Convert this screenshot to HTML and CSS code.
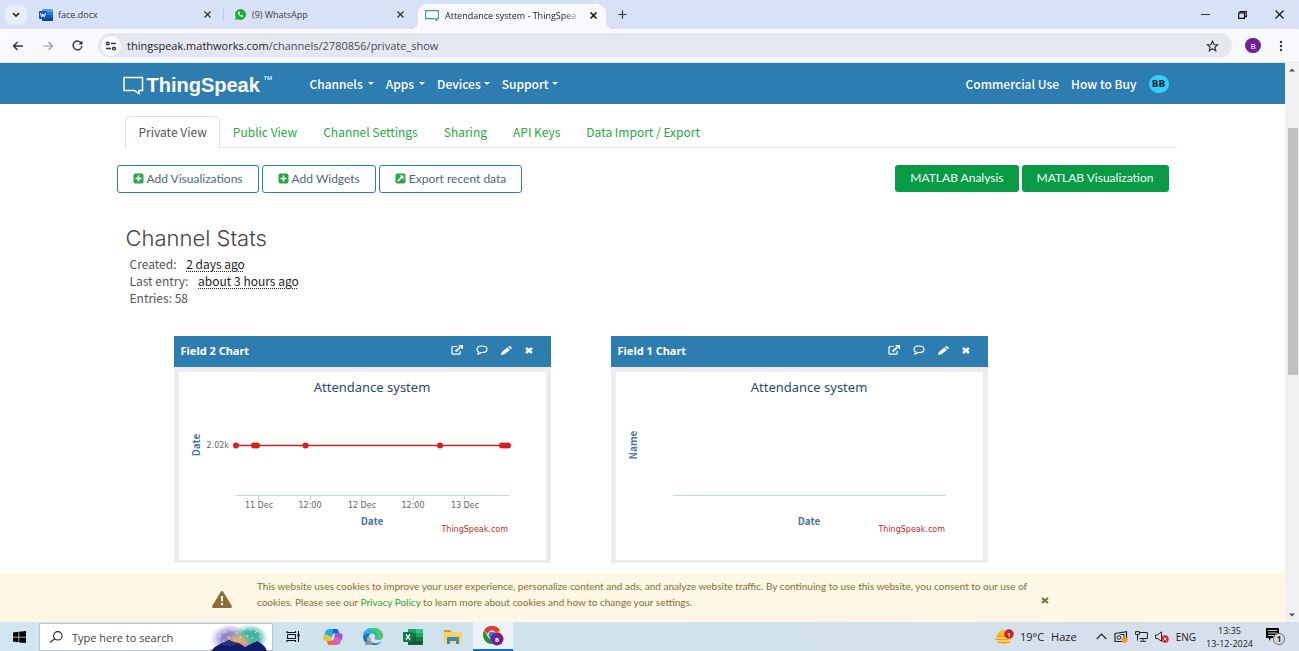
FILE: index.html
```
<!DOCTYPE html>
<html lang="en">
<head>
<meta charset="utf-8">
<title>Attendance system - ThingSpeak</title>
<link rel="stylesheet" href="styles.css">
</head>
<body>
<header class="tabstrip">
  <button class="tab-search" aria-label="Search tabs"><svg width="8" height="6" viewBox="0 0 8 6"><path d="M1 1l3 3 3-3" fill="none" stroke="#222" stroke-width="1.6"/></svg></button>
  <div class="tab tab-first">
    <svg width="14" height="12" viewBox="0 0 14 12"><rect x="3" width="11" height="12" rx="1" fill="#41a5ee"/><path d="M3 3h11v3H3z" fill="#2b7cd3"/><path d="M3 6h11v3H3z" fill="#185abd"/><path d="M3 9h11v2q0 1-1 1H4q-1 0-1-1z" fill="#103f91"/><rect y="2" width="8" height="8" rx="1" fill="#185abd"/><path d="M1.500 4l1.200 4L4 5l1.300 3 1.200-4" fill="none" stroke="#fff"/></svg>
    <span class="tab-title">face.docx</span>
    <button class="close" aria-label="Close tab"><svg width="7" height="7" viewBox="0 0 7 7"><path d="M.5.5l6 6M6.500.5l-6 6" stroke="#333" stroke-width="1.300"/></svg></button>
  </div>
  <div class="tab tab-second">
    <svg width="11" height="11" viewBox="0 0 12 12"><path d="M6 0a6 6 0 1 1-3 11.200L0 12l.8-3A6 6 0 0 1 6 0z" fill="#1faf38"/><path d="M4 3c-1 .6-1 2 .4 3.600S7.600 9 8.700 8.200c.5-.4.4-1-.1-1.200l-1-.5-.7.7C6 6.800 5.200 6 4.900 5.200l.6-.7-.5-1.200C4.800 2.900 4.400 2.800 4 3z" fill="#fff"/></svg>
    <span class="tab-title">(9) WhatsApp</span>
    <button class="close" aria-label="Close tab"><svg width="7" height="7" viewBox="0 0 7 7"><path d="M.5.5l6 6M6.500.5l-6 6" stroke="#333" stroke-width="1.300"/></svg></button>
  </div>
  <div class="tab tab-active">
    <svg width="14" height="11" viewBox="0 0 14 11"><path d="M.6.6h12.800v8h-1.500v2L9 8.600H.6z" fill="#fff" stroke="#3d93bd" stroke-width="1.100"/></svg>
    <span class="tab-title fade">Attendance system - ThingSpea</span>
    <button class="close" aria-label="Close tab"><svg width="7" height="7" viewBox="0 0 7 7"><path d="M.5.5l6 6M6.500.5l-6 6" stroke="#111" stroke-width="1.500"/></svg></button>
  </div>
  <button class="new-tab" aria-label="New tab"><svg width="9" height="9" viewBox="0 0 9 9"><path d="M4.500.5v8M.5 4.500h8" stroke="#333" stroke-width="1.200"/></svg></button>
  <div class="window-controls">
    <button aria-label="Minimize"><svg width="9" height="9" viewBox="0 0 9 9"><path d="M0 4.500h9" stroke="#333"/></svg></button>
    <button aria-label="Restore"><svg width="9" height="8" viewBox="0 0 9 8"><path d="M.7 2h5.800v5.300H.7zM2 2V.7h6.300v5H6.500" fill="none" stroke="#111" stroke-width="1.200"/></svg></button>
    <button aria-label="Close"><svg width="9" height="9" viewBox="0 0 9 9"><path d="M.5.5l8 8M8.500.5l-8 8" stroke="#111" stroke-width="1.100"/></svg></button>
  </div>
</header>

<div class="toolbar">
  <button aria-label="Back"><svg width="12" height="10" viewBox="0 0 12 10"><path d="M11 5H1.500M5.500 1l-4 4 4 4" fill="none" stroke="#333" stroke-width="1.400"/></svg></button>
  <button aria-label="Forward"><svg width="12" height="10" viewBox="0 0 12 10"><path d="M1 5h9.500M6.500 1l4 4-4 4" fill="none" stroke="#999" stroke-width="1.200"/></svg></button>
  <button aria-label="Reload"><svg width="11" height="11" viewBox="0 0 11 11"><path d="M9.500 3.500A4.400 4.400 0 1 0 9.900 6" fill="none" stroke="#333" stroke-width="1.400"/><path d="M10.500.5v4h-4z" fill="#333"/></svg></button>
  <div class="omnibox">
    <button class="site-info" aria-label="Site information"><svg width="12" height="10" viewBox="0 0 12 10"><g fill="none" stroke="#333" stroke-width="1.400"><circle cx="2.800" cy="2.500" r="1.400"/><path d="M6 2.500h5M1 7.500h5"/><circle cx="9" cy="7.500" r="1.400"/></g></svg></button>
    <span class="url">thingspeak.mathworks.com<span class="path">/channels/2780856/private_show</span></span>
    <button class="star" aria-label="Bookmark"><svg width="13" height="12" viewBox="0 0 13 12"><path d="M6.500 1.200l1.500 3.300 3.600.3-2.700 2.400.8 3.500-3.200-1.900-3.200 1.900.8-3.500L1.400 4.800 5 4.500z" fill="none" stroke="#333" stroke-width="1.200"/></svg></button>
  </div>
  <button class="profile">B</button>
  <button class="menu" aria-label="Menu"><svg width="4" height="12" viewBox="0 0 4 12"><g fill="#333"><circle cx="2" cy="2" r="1.200"/><circle cx="2" cy="6" r="1.200"/><circle cx="2" cy="10" r="1.200"/></g></svg></button>
</div>

<div class="viewport">
  <div class="page">
    <nav class="navbar">
      <div class="container nav-inner">
        <a class="brand" href="#"><svg width="21" height="19" viewBox="0 0 21 19"><path d="M1 1.500h18.500v13H16v3l-4.500-3H1z" fill="none" stroke="#fff" stroke-width="1.500"/></svg><span>ThingSpeak</span><small>™</small></a>
        <div class="nav-links">
          <a class="drop" href="#">Channels</a><a class="drop" href="#">Apps</a><a class="drop tight" href="#">Devices</a><a class="drop tight" href="#">Support</a>
        </div>
        <div class="nav-right"><a href="#">Commercial Use</a><a href="#">How to Buy</a><a class="avatar" href="#">BB</a></div>
      </div>
    </nav>
    <main class="container content">
      <div class="tabs">
        <a class="active" href="#">Private View</a><a href="#">Public View</a><a href="#">Channel Settings</a><a href="#">Sharing</a><a href="#">API Keys</a><a href="#">Data Import / Export</a>
      </div>
      <div class="actions">
        <button class="outline"><svg width="11" height="11" viewBox="0 0 11 11"><rect x=".5" y=".5" width="10" height="10" rx="2" fill="#28a745"/><path d="M5.500 2.500v6M2.500 5.500h6" stroke="#fff" stroke-width="1.600"/></svg>Add Visualizations</button>
        <button class="outline"><svg width="11" height="11" viewBox="0 0 11 11"><rect x=".5" y=".5" width="10" height="10" rx="2" fill="#28a745"/><path d="M5.500 2.500v6M2.500 5.500h6" stroke="#fff" stroke-width="1.600"/></svg>Add Widgets</button>
        <button class="outline"><svg width="11" height="11" viewBox="0 0 11 11"><rect x=".5" y=".5" width="10" height="10" rx="2" fill="#28a745"/><path d="M2.800 8.200l4-4" stroke="#fff" stroke-width="1.700"/><path d="M4.500 2.500h4v4z" fill="#fff"/></svg>Export recent data</button>
        <span class="grow"></span>
        <button class="solid">MATLAB Analysis</button>
        <button class="solid">MATLAB Visualization</button>
      </div>
      <section class="stats">
        <h3>Channel Stats</h3>
        <p>Created: <span class="when">2 days ago</span></p>
        <p>Last entry: <span class="when">about 3 hours ago</span></p>
        <p>Entries: 58</p>
      </section>
      <div class="charts">
        <section class="card">
          <div class="card-head"><h4>Field 2 Chart</h4>
            <button aria-label="Open"><svg width="12" height="10" viewBox="0 0 12 10"><path d="M6 1.500H1.800Q1 1.500 1 2.300v6q0 .9.800.9h6.500q.9 0 .9-.9V6" fill="none" stroke="#fff" stroke-width="1.200"/><path d="M4.500 6.500L9 2.500" stroke="#fff" stroke-width="1.700"/><path d="M7 0h5v4.500z" fill="#fff"/></svg></button>
            <button aria-label="Comment"><svg width="12" height="10" viewBox="0 0 12 10"><path d="M6 1c3 0 5 1.300 5 3.200S9 7.500 6 7.500H5C4.200 8.400 3 9 1.800 9q.9-.9.900-2C1.500 6.300 1 5.300 1 4.200 1 2.300 3 1 6 1z" fill="none" stroke="#fff" stroke-width="1.200"/></svg></button>
            <button aria-label="Edit"><svg width="11" height="9" viewBox="0 0 11 9"><path d="M0 9l.8-3L6.300 1.600l2.600 2.300L3.400 8.300zM7 1l1-.8q.6-.4 1.200 0l1.400 1.300q.5.500 0 1l-1 .8z" fill="#fff"/></svg></button>
            <button aria-label="Remove"><svg width="8" height="7" viewBox="0 0 8 7"><path d="M1 1l6 5M7 1L1 6" stroke="#fff" stroke-width="2.400"/></svg></button>
          </div>
          <div class="card-body">
            <svg class="chart" viewBox="0 0 367 188">
              <text class="c-title" x="193" y="20">Attendance system</text>
              <text class="axis-title" transform="translate(21 73) rotate(-90)">Date</text>
              <text class="tick end" x="50" y="76">2.02k</text>
              <path class="axis" d="M57 123.500h273M79.500 123v5M131.500 123v5M182.500 123v5M234.500 123v5M285.500 123v5"/>
              <path class="series" d="M57 73.500h272"/>
              <g class="dots"><circle cx="57" cy="73.500" r="3"/><circle cx="75" cy="73.500" r="3"/><circle cx="78" cy="73.500" r="3"/><circle cx="126.500" cy="73.500" r="3"/><circle cx="261" cy="73.500" r="3"/><circle cx="323" cy="73.500" r="3"/><circle cx="326" cy="73.500" r="3"/><circle cx="329" cy="73.500" r="3"/></g>
              <g class="tick"><text x="80" y="136">11 Dec</text><text x="131" y="136">12:00</text><text x="183" y="136">12 Dec</text><text x="234" y="136">12:00</text><text x="286" y="136">13 Dec</text></g>
              <text class="axis-title" x="193" y="153">Date</text>
              <text class="credit" x="329" y="160">ThingSpeak.com</text>
            </svg>
          </div>
        </section>
        <section class="card">
          <div class="card-head"><h4>Field 1 Chart</h4>
            <button aria-label="Open"><svg width="12" height="10" viewBox="0 0 12 10"><path d="M6 1.500H1.800Q1 1.500 1 2.300v6q0 .9.800.9h6.500q.9 0 .9-.9V6" fill="none" stroke="#fff" stroke-width="1.200"/><path d="M4.500 6.500L9 2.500" stroke="#fff" stroke-width="1.700"/><path d="M7 0h5v4.500z" fill="#fff"/></svg></button>
            <button aria-label="Comment"><svg width="12" height="10" viewBox="0 0 12 10"><path d="M6 1c3 0 5 1.300 5 3.200S9 7.500 6 7.500H5C4.200 8.400 3 9 1.800 9q.9-.9.900-2C1.500 6.300 1 5.300 1 4.200 1 2.300 3 1 6 1z" fill="none" stroke="#fff" stroke-width="1.200"/></svg></button>
            <button aria-label="Edit"><svg width="11" height="9" viewBox="0 0 11 9"><path d="M0 9l.8-3L6.300 1.600l2.600 2.300L3.400 8.300zM7 1l1-.8q.6-.4 1.200 0l1.400 1.300q.5.500 0 1l-1 .8z" fill="#fff"/></svg></button>
            <button aria-label="Remove"><svg width="8" height="7" viewBox="0 0 8 7"><path d="M1 1l6 5M7 1L1 6" stroke="#fff" stroke-width="2.400"/></svg></button>
          </div>
          <div class="card-body">
            <svg class="chart" viewBox="0 0 367 188">
              <text class="c-title" x="193" y="20">Attendance system</text>
              <text class="axis-title" transform="translate(21 73) rotate(-90)">Name</text>
              <path class="axis" d="M57 123.500h273"/>
              <text class="axis-title" x="193" y="153">Date</text>
              <text class="credit" x="329" y="160">ThingSpeak.com</text>
            </svg>
          </div>
        </section>
      </div>
    </main>
    <aside class="cookies">
      <svg width="20" height="17" viewBox="0 0 20 17"><path d="M8.800.8q1.200-1.500 2.400 0l8.500 14q.8 1.900-1.200 2.200h-17q-2-.3-1.200-2.200z" fill="#8a6d3b"/><path d="M8.800 5h2.400l-.4 5.500H9.200zM8.900 12h2.200v2.200H8.900z" fill="#fcf8e3"/></svg>
      <p>This website uses cookies to improve your user experience, personalize content and ads, and analyze website traffic. By continuing to use this website, you consent to our use of cookies. Please see our <a href="#">Privacy Policy</a> to learn more about cookies and how to change your settings.</p>
      <button aria-label="Dismiss"><svg width="8" height="7" viewBox="0 0 8 7"><path d="M1 1l6 5M7 1L1 6" stroke="#8a6d3b" stroke-width="2.200"/></svg></button>
    </aside>
  </div>
  <div class="scrollbar">
    <svg width="6" height="4" viewBox="0 0 6 4"><path d="M0 3.500L3 .5l3 3z" fill="#505050"/></svg>
    <div class="track"><div class="thumb"></div></div>
    <svg width="6" height="4" viewBox="0 0 6 4"><path d="M0 .5l3 3 3-3z" fill="#505050"/></svg>
  </div>
</div>

<footer class="taskbar">
  <button class="start" aria-label="Start"><svg width="13" height="12" viewBox="0 0 13 12"><path d="M0 1.500l5.500-.7v4.900H0zM6.200.7L13 0v5.700H6.200zM0 6.400h5.500v4.900L0 10.600zM6.200 6.400H13V12l-6.800-.6z" fill="#000"/></svg></button>
  <label class="search">
    <svg width="14" height="12" viewBox="0 0 14 12"><g fill="none" stroke="#222" stroke-width="1.100"><circle cx="8.800" cy="4.800" r="4.200"/><path d="M5.700 7.800L1 11.500"/></g></svg>
    <input type="text" placeholder="Type here to search" aria-label="Search">
    <svg width="58" height="27" viewBox="0 0 58 27"><defs><radialGradient id="g1"><stop offset=".4" stop-color="#8e86d0"/><stop offset="1" stop-color="#b3a9e0" stop-opacity="0"/></radialGradient><radialGradient id="g2"><stop offset=".5" stop-color="#3fb7a2"/><stop offset="1" stop-color="#7ad0c5" stop-opacity="0"/></radialGradient><radialGradient id="g3"><stop offset=".2" stop-color="#e2b26c"/><stop offset="1" stop-color="#c9a983" stop-opacity="0"/></radialGradient></defs><ellipse cx="20" cy="15" rx="20" ry="15" fill="url(#g1)"/><ellipse cx="40" cy="14" rx="18" ry="14" fill="url(#g2)"/><ellipse cx="28" cy="17" rx="15" ry="10" fill="url(#g3)"/><path d="M29 17l4 6 5-5z" fill="#ee9678"/><g stroke="#fff" stroke-width=".7"><path d="M9 12l2 1M15 7l1 2M22 5v2M27 8l-1 2M33 4l1 2M40 5v2M47 7l-2 2M51 12l-2 1M31 12l-1 2M37 11l1 2M43 13l-2 2M18 13l2 1M13 17l2 1M47 17l-2 1"/></g><path d="M1 27q4-5 9-7l9-4q6 3 10 3l6 4 12-6q8 4 10 10z" fill="#101c68"/><path d="M10 20l9-4q6 3 10 3-5 3-10 3t-9-2z" fill="#243484"/></svg>
  </label>
  <div class="apps">
    <button aria-label="Task view"><svg width="14" height="13" viewBox="0 0 14 13"><path d="M1 1v1.500h8.500V1M1.500 4.500h8v4h-8zM1 12v-1.500h8.500V12M12.500 1v11" fill="none" stroke="#111" stroke-width="1.100"/><path d="M11.500 4h2v2.500h-2z" fill="#111"/></svg></button>
    <button aria-label="Copilot"><svg width="20" height="16" viewBox="0 0 20 16"><path d="M7 0h6q2 0 2.500 2l.7 2H12q-2 0-2.600 2L7.600 12H4Q0 12 .6 8L2.500 2.500Q3.500 0 7 0z" fill="#25a9e0"/><path d="M10 0h3q2 0 2.500 2l.7 2H12q-1.600 0-2.300 1.600z" fill="#1967c6"/><path d="M2 5L.6 8Q0 12 4 12h3.600l1.200-4z" fill="#e8c63d"/><path d="M13 16H7q-2 0-2.500-2l-.7-2H8q2 0 2.600-2l1.800-6H16q4 0 3.400 4l-1.900 5.500Q16.500 16 13 16z" fill="#d862b5"/><path d="M12.400 4H16q4 0 3.400 4l-1 3q-3-4-7.300-3z" fill="#a653db"/><path d="M10 16H7q-2 0-2.500-2l-.7-2H8q1.600 0 2.300-1.600z" fill="#f36a45"/></svg></button>
    <button aria-label="Edge"><svg width="20" height="17" viewBox="0 0 20 17"><path d="M0 8.500A10 8.500 0 0 1 20 7.500c0 3-2.200 4.500-5 4.500-3 0-4-1.200-3-2.500 1-1.800-.6-4-3.500-4C4 5.500 1 8 0 11z" fill="#24b5d6"/><path d="M5 1.200C11-1.500 20 1 20 7.500c0 3-2.200 4.500-5 4.500-2 0-3-.6-3.200-1.400 4 .4 4.600-6.600-2.800-8.100z" fill="#52c66a"/><path d="M0 9c1-3 4.500-4 8.500-3.500-3.500 1-4 6 0 8.500 3 1.800 7 1.500 10-.6C15.500 18 6 18.500 2 14Q0 12 0 9z" fill="#1277ca"/><circle cx="6" cy="11" r="2.200" fill="#c8a58b"/><path d="M2 17q0-4 4-4t4 4z" fill="#8b9398"/></svg></button>
    <button aria-label="Excel"><svg width="20" height="16" viewBox="0 0 20 16"><path d="M5 1q0-1 1-1h7v16H6q-1 0-1-1z" fill="#21a366"/><path d="M13 0h6q1 0 1 1v3h-7z" fill="#33c481"/><path d="M5 4h8v4H5z" fill="#107c41"/><path d="M13 4h7v4h-7z" fill="#21a366"/><path d="M5 8h15v7q0 1-1 1H6q-1 0-1-1z" fill="#185c37"/><path d="M13 8h7v4h-7z" fill="#107c41"/><rect y="3" width="10" height="10" rx="1" fill="#107c41"/><path d="M3 5.500l4 5M7 5.500l-4 5" stroke="#fff" stroke-width="1.300"/></svg></button>
    <button aria-label="File Explorer"><svg width="18" height="14" viewBox="0 0 18 14"><path d="M0 1q0-1 1-1h5l2 2H0z" fill="#d99a1f"/><path d="M0 2h17q1 0 1 1v10H0z" fill="#f8d167"/><path d="M3 8q0-1 1-1h10q1 0 1 1v6h-3v-3H6v3H3z" fill="#3b8cb8"/></svg></button>
    <button class="running" aria-label="Chrome"><svg width="22" height="20" viewBox="0 0 22 20"><circle cx="10" cy="9" r="9" fill="#fbc116"/><path d="M10 9L2.200 4.500A9 9 0 0 1 17.800 4.500z" fill="#e33b2e"/><path d="M10 0a9 9 0 0 1 7.800 4.500H10A4.500 4.500 0 0 0 5.800 7.500L2.200 4.500A9 9 0 0 1 10 0z" fill="#e33b2e"/><path d="M2.200 4.500L6.100 11.300Q8 14 11 13.300L10 18A9 9 0 0 1 2.200 4.500z" fill="#229342"/><circle cx="10" cy="9" r="4.400" fill="#fff"/><circle cx="10" cy="9" r="3.500" fill="#3a7de8"/><circle cx="15" cy="13" r="6.500" fill="#71218f"/><text class="mini" x="15" y="16">B</text></svg></button>
  </div>
  <span class="grow"></span>
  <button class="weather"><svg width="19" height="16" viewBox="0 0 19 16"><circle cx="9" cy="8" r="7" fill="#f9b62b"/><path d="M1 7.500h14M0 10.500h13M3 13.500h12" stroke="#f0982a" stroke-width="1.200"/><path d="M1 9h15M2 12h14" stroke="#ffd65c" stroke-width="1.400"/><circle cx="14" cy="5" r="4.700" fill="#cb2127"/><text class="mini" x="14" y="8">1</text></svg><span>19°C</span><span>Haze</span></button>
  <div class="tray">
    <button aria-label="Hidden icons"><svg width="11" height="7" viewBox="0 0 11 7"><path d="M.7 6l4.800-5 4.800 5" fill="none" stroke="#222" stroke-width="1.200"/></svg></button>
    <button aria-label="Meet now"><svg width="14" height="12" viewBox="0 0 14 12"><path d="M1 2.500L12.500.7v8L8 10.500H1z" fill="none" stroke="#222" stroke-width="1.200"/><circle cx="5" cy="6.500" r="1.800" fill="none" stroke="#222"/><path d="M6.500 3.500H10v3" fill="none" stroke="#222"/><circle cx="10.500" cy="9" r="3" fill="#f29a1f"/></svg></button>
    <button aria-label="Network"><svg width="13" height="11" viewBox="0 0 13 11"><path d="M4 1.500h8.400v6H4.500M8 7.500v2.800M5 10.300h6M.6.6h3.800v3H.6zM2.500 3.600v6" fill="none" stroke="#222"/></svg></button>
    <button aria-label="Volume muted"><svg width="14" height="12" viewBox="0 0 14 12"><path d="M.6 4h2L6.500.8v9.400L2.600 7.500h-2z" fill="none" stroke="#222"/><circle cx="10" cy="8" r="3.700" fill="#d9232e"/><path d="M8.500 6.500l3 3M11.500 6.500l-3 3" stroke="#fff"/></svg></button>
    <span class="lang">ENG</span>
  </div>
  <div class="clock"><span>13:35</span><span>13-12-2024</span></div>
  <button class="notify" aria-label="Notifications"><svg width="20" height="19" viewBox="0 0 20 19"><path d="M0 1h13v10H5l-2 3v-3H0z" fill="#000"/><path d="M2 3.500h9M2 6h9M2 8.500h6" stroke="#dfe5f0" stroke-width=".9"/><circle cx="13" cy="12" r="5.600" fill="#d2d6de" stroke="#777"/><text class="mini dark" x="13" y="15">1</text></svg></button>
</footer>
</body>
</html>
```
FILE: styles.css
```
* { box-sizing: border-box; }
body { margin: 0; height: 100vh; display: flex; flex-direction: column; overflow: hidden; background: #fff; color: #333; font-family: "Noto Sans CJK SC", "Noto Sans", sans-serif; font-size: 12px; }
button { margin: 0; padding: 0; border: 0; background: none; font: inherit; color: inherit; display: inline-flex; align-items: center; justify-content: center; }
a { text-decoration: none; color: #28a745; }
svg { display: block; flex: none; }
p, h3, h4 { margin: 0; font-weight: 400; }
.grow { flex: 1; }

/* browser frame */
.tabstrip { flex: none; height: 29px; display: flex; align-items: center; background: #d8e2f6; font: 9px "Open Sans", sans-serif; color: #3c3c46; }
.tab-search { width: 22px; height: 20px; margin-left: 5px; border-radius: 7px; background: #e9eefb; }
.tab { display: flex; align-items: center; height: 25px; }
.tab-title { flex: 1; margin-left: 6px; white-space: nowrap; }
.tab-first { width: 184px; margin-left: 12px; padding-right: 12px; }
.tab-first .tab-title { margin-left: 5px; }
.tab-second { width: 195px; padding: 0 14px 0 11px; border-left: 1px solid #b5cdf5; height: 13px; }
.tab-active { position: relative; align-self: flex-end; width: 188px; padding: 0 9px 3px 7px; border-radius: 9px 9px 0 0; background: #f9f9fe; color: #222; }
.tab-active::before, .tab-active::after { content: ""; position: absolute; bottom: 0; width: 8px; height: 8px; }
.tab-active::before { left: -8px; background: radial-gradient(circle at 0 0, transparent 8px, #f9f9fe 8px); }
.tab-active::after { right: -8px; background: radial-gradient(circle at 100% 0, transparent 8px, #f9f9fe 8px); }
.fade { mask-image: linear-gradient(to right, #000 85%, transparent 100%); margin-right: 6px; }
.new-tab { margin-left: 12px; }
.window-controls { margin-left: auto; display: flex; gap: 28px; padding-right: 15px; }
.toolbar { flex: none; height: 34px; display: flex; align-items: center; gap: 18px; padding: 0 16px 0 12px; background: #f9f9fe; border-radius: 8px 8px 0 0; border-bottom: 1px solid #e3e8f4; }
.omnibox { flex: 1; height: 25px; display: flex; align-items: center; padding: 0 13px 0 3px; border-radius: 13px; background: #e5e7f2; font: 11px "Open Sans", sans-serif; color: #1d1d22; margin-left: -3px; }
.site-info { width: 20px; height: 20px; border-radius: 10px; background: #fbfbff; }
.url { flex: 1; margin-left: 6px; }
.path { color: #4c4d58; }
.profile { width: 16px; height: 15px; margin-left: -5px; border-radius: 8px; background: #71218f; color: #fff; font: 8px "Open Sans", sans-serif; }

/* viewport */
.viewport { flex: 1; min-height: 0; display: flex; }
.page { flex: 1; min-width: 0; display: flex; flex-direction: column; }
.scrollbar { width: 14px; display: flex; flex-direction: column; align-items: center; padding: 5px 0; background: #f1f1f1; }
.track { flex: 1; width: 11px; padding: 56px 0 0 1px; }
.thumb { height: 51%; background: #c1c1c1; }
.container { width: 100%; max-width: 1052px; margin: 0 auto; }
.navbar { flex: none; height: 41px; background: #2e7db1; }
.nav-inner { height: 100%; display: flex; align-items: center; padding-left: 6px; font-weight: 500; }
.navbar a { color: #fff; }
.brand { display: flex; align-items: center; gap: 3px; width: 187px; margin-top: 4px; font: bold 20px "Liberation Sans", Arial, sans-serif; }
.brand small { align-self: flex-start; font-size: 10px; font-weight: 400; }
.nav-links { flex: 1; display: flex; gap: 12px; }
.drop { display: flex; align-items: center; gap: 5px; }
.drop.tight { gap: 3px; }
.drop::after { content: ""; border: 3px solid transparent; border-top-color: #fff; border-bottom: 0; }
.nav-right { display: flex; align-items: center; gap: 12px; }
.avatar { width: 20px; height: 18px; border-radius: 10px; background: #33cdf5; font: bold 9px/18px "DejaVu Sans", sans-serif; text-align: center; }
.navbar .avatar { color: #0b2742; }
.content { flex: 1; min-height: 0; padding-top: 12px; }
.tabs { display: flex; margin: 0 -8px 0 8px; border-bottom: 1px solid #e4e6e8; }
.tabs a { height: 32px; margin-bottom: -1px; padding: 0 12px; line-height: 30px; border: 1px solid transparent; border-bottom: 0; }
.tabs .active { padding: 0 12px 0 13px; border-color: #dee2e6; border-radius: 5px 5px 0 0; background: #fff; color: #555; }
.actions { display: flex; gap: 3px; margin-top: 17px; font: 12px Lato, sans-serif; }
.actions button { height: 28px; padding: 0 15px 2px; gap: 3px; border-radius: 3px; }
.outline { border: 1px solid #2e7db1; background: #fff; color: #4a6880; }
.actions .solid { height: 27px; background: #089a45; color: #f4fff8; }
.stats { margin-top: 30px; padding-left: 13px; color: #555; line-height: 17px; }
.stats h3 { margin: 0 0 2px -4px; font: 300 22px/30px Inter, sans-serif; color: #444; }
.when { margin-left: 7px; color: #222; text-decoration: underline dotted; text-underline-offset: 2px; }
.charts { display: flex; gap: 60px; margin: 30px 0 0 57px; }
.card { width: 377px; background: #ededef; }
.card-head { height: 31px; display: flex; align-items: center; gap: 13px; padding: 0 18px 3px 7px; background: #2e7db1; }
.card-head h4 { flex: 1; color: #fff; font: bold 11px "Noto Sans", sans-serif; }
.card-body { padding: 5px 5px 3px; }
.chart { width: 100%; background: #fff; text-anchor: middle; }
.c-title { font: 13px "Noto Sans", sans-serif; fill: #274b6d; }
.axis-title { font: bold 10px "Noto Sans CJK SC", sans-serif; fill: #4d759e; }
.tick { font: 8px "DejaVu Sans", sans-serif; fill: #666; }
.tick.end { text-anchor: end; }
.axis { stroke: #c5d5dc; fill: none; }
.series { stroke: #d62020; stroke-width: 1.500; }
.dots { fill: #d62020; }
.credit { font: 8px "DejaVu Sans", sans-serif; fill: #c22b2b; text-anchor: end; }
.cookies { flex: none; display: flex; align-items: center; justify-content: center; height: 49px; padding-right: 24px; background: #fdf7e3; color: #8a6d3b; font: 10px/16px Lato, sans-serif; }
.cookies > svg { margin: 4px 25px 0 0; }
.cookies p { width: 784px; padding-bottom: 8px; }
.cookies button { margin-top: 6px; }

/* taskbar */
.taskbar { flex: none; height: 29px; display: flex; align-items: center; background: linear-gradient(to right, #cfe5ef, #d0e2ec 50%, #d8dfec); color: #222; font: 11px "Open Sans", sans-serif; }
.start { width: 39px; }
.search { width: 234px; height: 28px; display: flex; align-items: center; gap: 9px; padding: 1px 4px 0 9px; border: 1px solid #b7c5cc; background: #fff; }
.search input { flex: 1; min-width: 0; padding: 0; border: 0; outline: 0; background: none; font: 11px "Open Sans", sans-serif; }
.search input::placeholder { color: #444; opacity: 1; }
.apps { display: flex; align-self: stretch; }
.apps button { width: 40px; }
.apps .running { background: #ecf3fa; border-bottom: 2px solid #0a73c9; }
.weather { gap: 6px; margin-right: 19px; }
.weather span + span { margin-left: 1px; }
.tray { display: flex; align-items: center; gap: 7px; }
.lang { font-size: 10px; }
.clock { display: flex; flex-direction: column; align-items: center; margin: 0 13px 0 10px; font-size: 9px; line-height: 13px; }
.notify { margin-right: 13px; }
.mini { font: bold 6px "Open Sans", sans-serif; fill: #fff; text-anchor: middle; }
.mini.dark { fill: #222; font-size: 8px; }
```
